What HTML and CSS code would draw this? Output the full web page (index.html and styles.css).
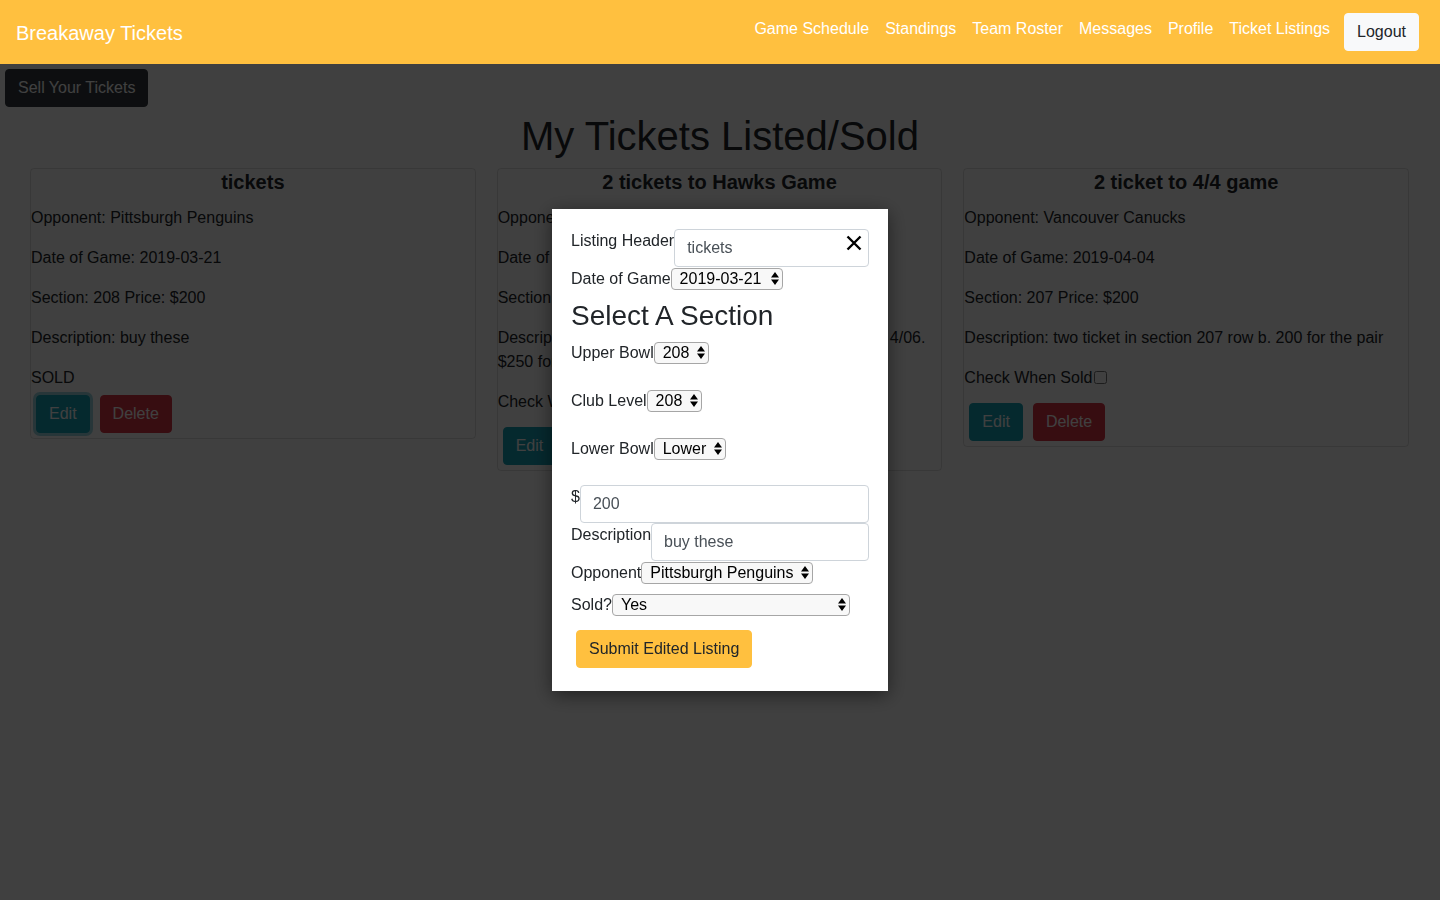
FILE: index.html
```html
<!DOCTYPE html>
<html lang="en">
<head>
<meta charset="utf-8">
<title>Breakaway Tickets</title>
<link rel="stylesheet" href="styles.css">
</head>
<body>
<nav class="navbar">
  <a class="brand" href="#">Breakaway Tickets</a>
  <ul class="nav-links">
    <li><a href="#">Game Schedule</a></li>
    <li><a href="#">Standings</a></li>
    <li><a href="#">Team Roster</a></li>
    <li><a href="#">Messages</a></li>
    <li><a href="#">Profile</a></li>
    <li><a href="#">Ticket Listings</a></li>
  </ul>
  <button class="btn btn-light logout">Logout</button>
</nav>

<main class="page">
  <button class="btn btn-dark sell">Sell Your Tickets</button>
  <h1 class="page-title">My Tickets Listed/Sold</h1>
  <div class="cards">
    <div class="card">
      <h5 class="card-title">tickets</h5>
      <p>Opponent: Pittsburgh Penguins</p>
      <p>Date of Game: 2019-03-21</p>
      <p>Section: 208 Price: $200</p>
      <p>Description: buy these</p>
      <div class="sold">SOLD</div>
      <div class="card-actions">
        <button class="btn btn-info focused">Edit</button>
        <button class="btn btn-danger">Delete</button>
      </div>
    </div>
    <div class="card">
      <h5 class="card-title">2 tickets to Hawks Game</h5>
      <p>Opponent: Chicago Blackhawks</p>
      <p>Date of Game: 2019-04-06</p>
      <p>Section: 210 Price: $250</p>
      <p>Description: 2 tickets to Hawks game in section 210 on 4/06. $250 for the pair</p>
      <label class="check-label">Check When Sold</label><input type="checkbox" class="check">
      <div class="card-actions">
        <button class="btn btn-info">Edit</button>
        <button class="btn btn-danger">Delete</button>
      </div>
    </div>
    <div class="card">
      <h5 class="card-title">2 ticket to 4/4 game</h5>
      <p>Opponent: Vancouver Canucks</p>
      <p>Date of Game: 2019-04-04</p>
      <p>Section: 207 Price: $200</p>
      <p>Description: two ticket in section 207 row b. 200 for the pair</p>
      <label class="check-label">Check When Sold</label><input type="checkbox" class="check">
      <div class="card-actions">
        <button class="btn btn-info">Edit</button>
        <button class="btn btn-danger">Delete</button>
      </div>
    </div>
  </div>
</main>

<div class="overlay">
  <div class="modal">
    <button class="close" aria-label="Close">
      <svg width="16" height="16" viewBox="0 0 16 16"><path d="M1.5 1.5 L14.5 14.5 M14.5 1.5 L1.5 14.5" stroke="#000" stroke-width="2.4" fill="none"/></svg>
    </button>
    <div class="frow">
      <label>Listing Header</label>
      <input class="form-control" type="text" value="tickets">
    </div>
    <div class="frow">
      <label>Date of Game</label>
      <span class="sel-wrap"><select class="sel sel-date"><option>2019-03-21</option></select><svg class="arrows" width="8" height="13" viewBox="0 0 8 13"><path d="M0 5.5 L4 0 L8 5.5 Z M0 7.5 L8 7.5 L4 13 Z" fill="#000"/></svg></span>
    </div>
    <h3 class="section-title">Select A Section</h3>
    <div class="frow sec">
      <label>Upper Bowl</label>
      <span class="sel-wrap"><select class="sel sel-num"><option>208</option></select><svg class="arrows" width="8" height="13" viewBox="0 0 8 13"><path d="M0 5.5 L4 0 L8 5.5 Z M0 7.5 L8 7.5 L4 13 Z" fill="#000"/></svg></span>
    </div>
    <div class="frow sec">
      <label>Club Level</label>
      <span class="sel-wrap"><select class="sel sel-num"><option>208</option></select><svg class="arrows" width="8" height="13" viewBox="0 0 8 13"><path d="M0 5.5 L4 0 L8 5.5 Z M0 7.5 L8 7.5 L4 13 Z" fill="#000"/></svg></span>
    </div>
    <div class="frow sec">
      <label>Lower Bowl</label>
      <span class="sel-wrap"><select class="sel sel-lower"><option>Lower</option></select><svg class="arrows" width="8" height="13" viewBox="0 0 8 13"><path d="M0 5.5 L4 0 L8 5.5 Z M0 7.5 L8 7.5 L4 13 Z" fill="#000"/></svg></span>
    </div>
    <div class="frow">
      <label>$</label>
      <input class="form-control" type="text" value="200">
    </div>
    <div class="frow">
      <label>Description</label>
      <input class="form-control" type="text" value="buy these">
    </div>
    <div class="frow">
      <label>Opponent</label>
      <span class="sel-wrap"><select class="sel sel-opp"><option>Pittsburgh Penguins</option></select><svg class="arrows" width="8" height="13" viewBox="0 0 8 13"><path d="M0 5.5 L4 0 L8 5.5 Z M0 7.5 L8 7.5 L4 13 Z" fill="#000"/></svg></span>
    </div>
    <div class="frow">
      <label>Sold?</label>
      <span class="sel-wrap"><select class="sel sel-sold"><option>Yes</option><option>No</option></select><svg class="arrows" width="8" height="13" viewBox="0 0 8 13"><path d="M0 5.5 L4 0 L8 5.5 Z M0 7.5 L8 7.5 L4 13 Z" fill="#000"/></svg></span>
    </div>
    <button class="btn btn-warning submit">Submit Edited Listing</button>
  </div>
</div>
</body>
</html>
```

FILE: styles.css
```css
* { box-sizing: border-box; }

html, body {
  margin: 0;
  padding: 0;
}

body {
  font-family: "Liberation Sans", Arial, sans-serif;
  font-size: 16px;
  line-height: 1.5;
  color: #212529;
  background: #fff;
}

/* ---------- navbar ---------- */
.navbar {
  position: relative;
  z-index: 20;
  display: flex;
  align-items: center;
  height: 64px;
  padding: 0 21px 0 16px;
  background: #ffc03f;
}

.brand {
  color: #fff;
  font-size: 20px;
  line-height: 30px;
  text-decoration: none;
  padding-top: 2px;
}

.nav-links {
  display: flex;
  list-style: none;
  margin: 0 0 7px auto;
  padding: 0;
}

.nav-links a {
  display: block;
  padding: 0 8px;
  color: #fff;
  text-decoration: none;
  line-height: 24px;
}

.logout { margin-left: 6px; }

/* ---------- buttons ---------- */
.btn {
  font-family: inherit;
  font-size: 16px;
  line-height: 24px;
  padding: 6px 12px;
  border: 1px solid transparent;
  border-radius: 4px;
  cursor: pointer;
}

.btn-light { background: #f8f9fa; border-color: #f8f9fa; color: #212529; }
.btn-dark { background: #343a40; border-color: #343a40; color: #fff; }
.btn-info { background: #17a2b8; border-color: #17a2b8; color: #fff; }
.btn-danger { background: #dc3545; border-color: #dc3545; color: #fff; }
.btn-warning { background: #ffc03f; border-color: #ffc03f; color: #212529; }

.btn-info.focused { box-shadow: 0 0 0 3px rgba(58, 176, 195, 0.5); }

/* ---------- page ---------- */
.sell {
  display: block;
  margin: 5px;
}

.page-title {
  margin: 0 0 8px;
  font-size: 40px;
  font-weight: 500;
  line-height: 1.2;
  text-align: center;
}

.cards {
  display: grid;
  grid-template-columns: repeat(3, 1fr);
  gap: 21px;
  align-items: start;
  padding: 0 31px 0 30px;
}

.card {
  border: 1px solid rgba(0, 0, 0, 0.125);
  border-radius: 4px;
}

.card-title {
  margin: 1px 0 12px;
  font-size: 20px;
  font-weight: 700;
  line-height: 1.2;
  text-align: center;
}

.card p { margin: 0 0 16px; }

.sold { margin: 0; }

.check-label {
  display: inline-block;
  margin-bottom: 8px;
}

.check {
  margin: 0 0 0 2px;
  width: 13px;
  height: 13px;
  vertical-align: -1px;
}

.card-actions { display: flex; }
.card-actions .btn { margin: 5px; }

/* ---------- modal ---------- */
.overlay {
  position: fixed;
  inset: 0;
  z-index: 10;
  background: rgba(0, 0, 0, 0.75);
  display: flex;
  align-items: center;
  justify-content: center;
}

.modal {
  position: relative;
  width: 336px;
  padding: 20px 19px 18px;
  background: #fff;
  box-shadow: 0 4px 18px rgba(0, 0, 0, 0.5);
}

.close {
  position: absolute;
  top: 26px;
  right: 26px;
  width: 16px;
  height: 16px;
  padding: 0;
  border: 0;
  background: none;
  line-height: 0;
  cursor: pointer;
}

.frow {
  display: flex;
  align-items: flex-start;
}

.frow label {
  display: inline-block;
  margin-bottom: 8px;
  line-height: 24px;
  white-space: nowrap;
}

.frow.sec { margin-bottom: 16px; }

.form-control {
  flex: 1;
  min-width: 0;
  height: 38px;
  padding: 6px 12px;
  border: 1px solid #ced4da;
  border-radius: 4px;
  font-family: inherit;
  font-size: 16px;
  line-height: 24px;
  color: #495057;
  background: #fff;
}

.sel-wrap {
  position: relative;
  display: inline-block;
  margin-top: 1px;
  height: 22px;
  line-height: 0;
}

.sel {
  -webkit-appearance: none;
  appearance: none;
  height: 22px;
  margin: 0;
  padding: 0 18px 0 8px;
  border: 1px solid #a6a6a6;
  border-radius: 4px;
  background: #f8f8f8;
  font-family: inherit;
  font-size: 16px;
  line-height: 20px;
  color: #000;
}

.arrows {
  position: absolute;
  top: 4px;
  right: 4px;
  pointer-events: none;
}

.sel-date { width: 112px; }
.sel-num { width: 55px; }
.sel-lower { width: 72px; }
.sel-opp { width: 172px; }
.sel-sold { width: 238px; }

.section-title {
  margin: 0 0 8px;
  font-size: 28px;
  font-weight: 500;
  line-height: 1.2;
}

.submit { margin: 5px; }
```
